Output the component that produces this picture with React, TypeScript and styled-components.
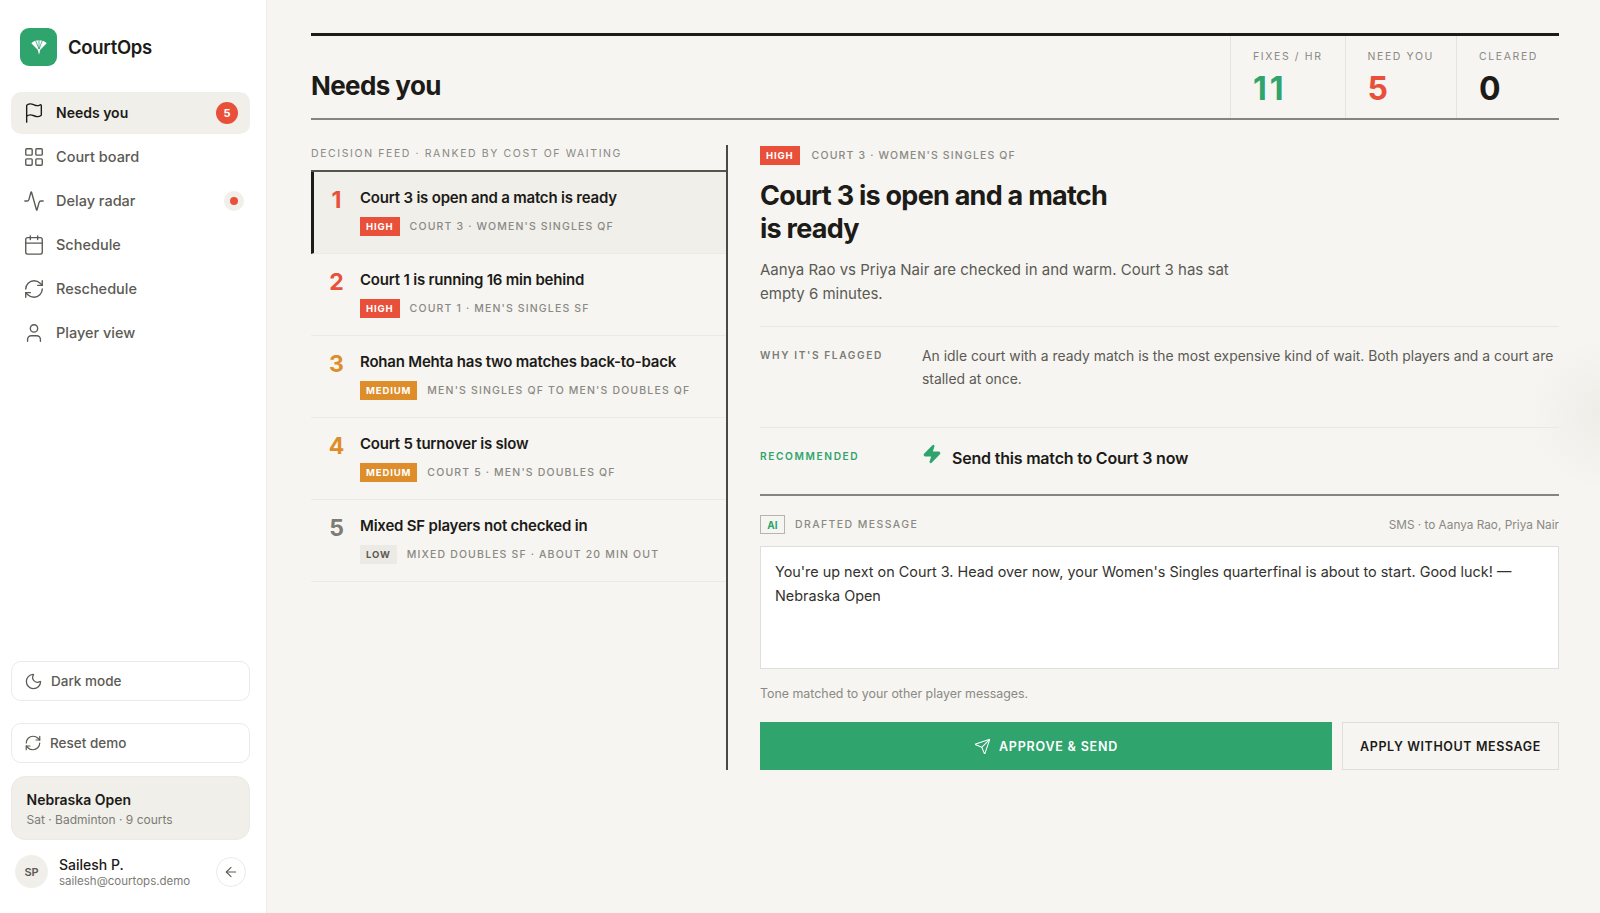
import React from 'react';
import styled, { createGlobalStyle } from 'styled-components';
import { Activity, ArrowLeft, Calendar, Flag, LayoutGrid, Moon, RefreshCw, Send, User, Zap } from 'lucide-react';

const GlobalStyle = createGlobalStyle`
    html, body {
        margin: 0;
        height: 100%;
        background: #f6f5f1;
        color: #1c1b18;
        font-family: "Inter", "Liberation Sans", sans-serif;
    }
    * { box-sizing: border-box; }
`;

const RED = '#e8503a';
const AMBER = '#dd8e2b';
const GREEN = '#2fa46d';
const GREY = '#7c7b75';

type Level = 'high' | 'medium' | 'low';

const levelColor = (l: Level) => (l === 'high' ? RED : l === 'medium' ? AMBER : GREY);

const NAV = [
    { label: 'Needs you', icon: Flag, active: true },
    { label: 'Court board', icon: LayoutGrid },
    { label: 'Delay radar', icon: Activity, dot: true },
    { label: 'Schedule', icon: Calendar },
    { label: 'Reschedule', icon: RefreshCw },
    { label: 'Player view', icon: User },
];

const FEED: { title: string; level: Level; meta: string }[] = [
    { title: 'Court 3 is open and a match is ready', level: 'high', meta: "COURT 3 · WOMEN'S SINGLES QF" },
    { title: 'Court 1 is running 16 min behind', level: 'high', meta: "COURT 1 · MEN'S SINGLES SF" },
    { title: 'Rohan Mehta has two matches back-to-back', level: 'medium', meta: "MEN'S SINGLES QF TO MEN'S DOUBLES QF" },
    { title: 'Court 5 turnover is slow', level: 'medium', meta: "COURT 5 · MEN'S DOUBLES QF" },
    { title: 'Mixed SF players not checked in', level: 'low', meta: 'MIXED DOUBLES SF · ABOUT 20 MIN OUT' },
];

const App: React.FC = () => {
    return (
        <Page>
            <GlobalStyle />
            <Sidebar>
                <Brand>
                    <LogoBox>
                        <svg width="16" height="16" viewBox="0 0 16 16">
                            <path fill="#fff" d="M0.3 4.2 C3.5 0.3 12.5 0.3 15.700 4.200 L9.300 10.800 L8 15.800 L6.700 10.800 Z" />
                            <path stroke={GREEN} strokeWidth="0.8" fill="none" d="M8 10 L4.600 1.500 M8 10 L8 0.800 M8 10 L11.400 1.500" />
                        </svg>
                    </LogoBox>
                    <BrandName>CourtOps</BrandName>
                </Brand>
                <Nav>
                    {NAV.map(item => (
                        <NavItem key={item.label} $active={item.active}>
                            <item.icon size={22} strokeWidth={1.5} />
                            <NavLabel $active={item.active}>{item.label}</NavLabel>
                            {item.active && <CountBadge>5</CountBadge>}
                            {item.dot && <DotWrap><Dot /></DotWrap>}
                        </NavItem>
                    ))}
                </Nav>
                <SideFooter>
                    <SideButton>
                        <Moon size={19} strokeWidth={1.6} />
                        Dark mode
                    </SideButton>
                    <SideButton>
                        <RefreshCw size={18} strokeWidth={1.6} />
                        Reset demo
                    </SideButton>
                    <EventCard>
                        <EventName>Nebraska Open</EventName>
                        <EventInfo>Sat · Badminton · 9 courts</EventInfo>
                    </EventCard>
                    <UserRow>
                        <Avatar>SP</Avatar>
                        <UserText>
                            <UserName>Sailesh P.</UserName>
                            <UserMail>sailesh@courtops.demo</UserMail>
                        </UserText>
                        <BackBtn><ArrowLeft size={16} strokeWidth={1.6} /></BackBtn>
                    </UserRow>
                </SideFooter>
            </Sidebar>
            <Main>
                <Header>
                    <PageTitle>Needs you</PageTitle>
                    <Stat><StatLabel>FIXES / HR</StatLabel><StatValue $color={GREEN}>11</StatValue></Stat>
                    <Stat><StatLabel>NEED YOU</StatLabel><StatValue $color={RED}>5</StatValue></Stat>
                    <Stat><StatLabel>CLEARED</StatLabel><StatValue $color="#1c1b18">0</StatValue></Stat>
                </Header>
                <Columns>
                    <Feed>
                        <FeedLabel>DECISION FEED · RANKED BY COST OF WAITING</FeedLabel>
                        <FeedList>
                            {FEED.map((row, i) => (
                                <FeedRow key={row.title} $active={i === 0}>
                                    <RowNum $color={levelColor(row.level)}>{i + 1}</RowNum>
                                    <RowBody>
                                        <RowTitle>{row.title}</RowTitle>
                                        <RowMeta>
                                            <Tag $level={row.level}>{row.level.toUpperCase()}</Tag>
                                            <MetaText>{row.meta}</MetaText>
                                        </RowMeta>
                                    </RowBody>
                                </FeedRow>
                            ))}
                        </FeedList>
                    </Feed>
                    <Detail>
                        <DetailTop>
                            <Tag $level="high">HIGH</Tag>
                            <MetaText>COURT 3 · WOMEN'S SINGLES QF</MetaText>
                        </DetailTop>
                        <DetailTitle>Court 3 is open and a match is ready</DetailTitle>
                        <DetailBody>Aanya Rao vs Priya Nair are checked in and warm. Court 3 has sat empty 6 minutes.</DetailBody>
                        <WhyRow>
                            <SideLabel>WHY IT'S FLAGGED</SideLabel>
                            <WhyText>An idle court with a ready match is the most expensive kind of wait. Both players and a court are stalled at once.</WhyText>
                        </WhyRow>
                        <RecRow>
                            <SideLabel $green>RECOMMENDED</SideLabel>
                            <RecAction>
                                <RecIcon size={20} color={GREEN} fill={GREEN} />
                                <RecText>Send this match to Court 3 now</RecText>
                            </RecAction>
                        </RecRow>
                        <DraftHead>
                            <AiTag>AI</AiTag>
                            <DraftLabel>DRAFTED MESSAGE</DraftLabel>
                            <DraftTo>SMS · to Aanya Rao, Priya Nair</DraftTo>
                        </DraftHead>
                        <Message>You're up next on Court 3. Head over now, your Women's Singles quarterfinal is about to start. Good luck! — Nebraska Open</Message>
                        <ToneNote>Tone matched to your other player messages.</ToneNote>
                        <Actions>
                            <ApproveBtn><Send size={17} strokeWidth={1.5} />APPROVE &amp; SEND</ApproveBtn>
                            <ApplyBtn>APPLY WITHOUT MESSAGE</ApplyBtn>
                        </Actions>
                    </Detail>
                </Columns>
            </Main>
            <EdgeGlow />
        </Page>
    );
};

export default App;

const Page = styled.div`
    position: relative;
    display: flex;
    width: 100%;
    height: 913px;
    overflow: hidden;
`;

const EdgeGlow = styled.div`
    position: absolute;
    top: 340px;
    right: -70px;
    width: 140px;
    height: 150px;
    border-radius: 50%;
    background: radial-gradient(closest-side, #eeede8, rgba(238, 237, 232, 0));
    pointer-events: none;
`;

const Sidebar = styled.aside`
    display: flex;
    flex-direction: column;
    flex: 0 0 267px;
    padding: 28px 16px 25px 11px;
    background: #ffffff;
    border-right: 1px solid #eeede8;
`;

const Brand = styled.div`
    display: flex;
    align-items: center;
    gap: 11px;
    padding-left: 9px;
    margin-bottom: 26px;
`;

const LogoBox = styled.div`
    display: flex;
    align-items: center;
    justify-content: center;
    width: 37px;
    height: 38px;
    border-radius: 9px;
    background: ${GREEN};
`;

const BrandName = styled.div`
    font-size: 18.5px;
    font-weight: 600;
    letter-spacing: -0.3px;
`;

const Nav = styled.nav`
    display: flex;
    flex-direction: column;
    gap: 2px;
`;

const NavItem = styled.div<{ $active?: boolean }>`
    display: flex;
    align-items: center;
    height: 42px;
    padding: 0 12px;
    border-radius: 10px;
    background: ${p => (p.$active ? '#f0efea' : 'transparent')};
    color: ${p => (p.$active ? '#1c1b18' : '#5b5a54')};
    font-weight: ${p => (p.$active ? 600 : 500)};
`;

const NavLabel = styled.span<{ $active?: boolean }>`
    flex: 1;
    margin-left: 11px;
    padding-bottom: 2px;
    font-size: ${p => (p.$active ? 14 : 14.5)}px;
`;

const CountBadge = styled.span`
    display: flex;
    align-items: center;
    justify-content: center;
    width: 22px;
    height: 22px;
    border-radius: 50%;
    background: ${RED};
    color: #fff;
    font-size: 11px;
    font-weight: 700;
`;

const DotWrap = styled.span`
    display: flex;
    align-items: center;
    justify-content: center;
    width: 20px;
    height: 20px;
    margin-right: -6px;
    border-radius: 50%;
    background: #f0efea;
`;

const Dot = styled.span`
    width: 8px;
    height: 8px;
    border-radius: 50%;
    background: ${RED};
`;

const SideFooter = styled.div`
    display: flex;
    flex-direction: column;
    margin-top: auto;
`;

const SideButton = styled.div`
    display: flex;
    align-items: center;
    gap: 8px;
    height: 40px;
    margin-bottom: 22px;
    padding-left: 12px;
    border: 1px solid #ebeae5;
    border-radius: 10px;
    color: #5b5a54;
    font-size: 13.5px;
    font-weight: 500;

    & + & {
        margin-bottom: 13px;
    }
`;

const EventCard = styled.div`
    height: 64px;
    padding: 14px 14.5px;
    border: 1px solid #ebeae5;
    border-radius: 14px;
    background: #f0efea;
`;

const EventName = styled.div`
    font-size: 14px;
    font-weight: 600;
    line-height: 18px;
`;

const EventInfo = styled.div`
    margin-top: 3px;
    color: #7c7b75;
    font-size: 12px;
    line-height: 16px;
`;

const UserRow = styled.div`
    display: flex;
    align-items: center;
    height: 33px;
    margin-top: 15px;
    padding: 0 4px;
`;

const Avatar = styled.div`
    display: flex;
    align-items: center;
    justify-content: center;
    width: 33px;
    height: 33px;
    border-radius: 50%;
    background: #f0efea;
    color: #5b5a54;
    font-size: 11px;
    font-weight: 600;
`;

const UserText = styled.div`
    flex: 1;
    margin: 2px 0 0 11px;
`;

const UserName = styled.div`
    font-size: 14px;
    font-weight: 500;
    line-height: 17px;
`;

const UserMail = styled.div`
    margin-top: 1px;
    color: #7c7b75;
    font-size: 11.5px;
    line-height: 15px;
`;

const BackBtn = styled.div`
    display: flex;
    align-items: center;
    justify-content: center;
    width: 30px;
    height: 30px;
    border: 1px solid #ebeae5;
    border-radius: 50%;
    color: #5b5a54;
`;

const Main = styled.main`
    flex: 1;
    padding: 33px 41px 0 44px;
`;

const Header = styled.header`
    display: flex;
    align-items: stretch;
    height: 87px;
    border-top: 3px solid #1c1b18;
    border-bottom: 2px solid #85847e;
`;

const PageTitle = styled.h1`
    flex: 1;
    align-self: flex-end;
    margin: 0 0 17px;
    font-size: 26px;
    font-weight: 700;
    letter-spacing: -0.6px;
`;

const Stat = styled.div`
    padding: 14px 22px 0;
    border-left: 1px solid #e4e3de;

    &:last-child {
        padding-right: 21px;
    }
`;

const StatLabel = styled.div`
    color: #8a8983;
    font-size: 10.5px;
    letter-spacing: 1.6px;
    white-space: nowrap;
`;

const StatValue = styled.div<{ $color: string }>`
    margin-top: 7px;
    color: ${p => p.$color};
    font-size: 32px;
    font-weight: 700;
    line-height: 38px;
    letter-spacing: 3px;
`;

const Columns = styled.div`
    display: flex;
    margin-top: 25px;
`;

const Feed = styled.section`
    flex: 0 0 417px;
    height: 625px;
    border-right: 2px solid #4a4945;
`;

const FeedLabel = styled.div`
    height: 25px;
    padding-top: 2px;
    color: #8a8983;
    font-size: 10.5px;
    letter-spacing: 1.6px;
    line-height: 14px;
`;

const FeedList = styled.div`
    border-top: 2px solid #55544f;
`;

const FeedRow = styled.div<{ $active?: boolean }>`
    display: flex;
    height: 82px;
    padding: 16px 0 0 ${p => (p.$active ? 9 : 12)}px;
    border-left: ${p => (p.$active ? '3px solid #1c1b18' : 'none')};
    border-bottom: 1px solid #ebeae5;
    background: ${p => (p.$active ? '#f0efea' : 'transparent')};
`;

const RowNum = styled.div<{ $color: string }>`
    width: 27px;
    margin: -3px 10px 0 0;
    color: ${p => p.$color};
    font-size: 23px;
    font-weight: 700;
    line-height: 30px;
    text-align: center;
`;

const RowBody = styled.div`
    display: flex;
    flex-direction: column;
    gap: 9px;
`;

const RowTitle = styled.div`
    font-size: 15px;
    font-weight: 600;
    line-height: 20px;
    letter-spacing: -0.2px;
`;

const RowMeta = styled.div`
    display: flex;
    align-items: center;
    gap: 10px;
`;

const Tag = styled.span<{ $level: Level }>`
    display: inline-flex;
    align-items: center;
    height: 19px;
    padding: 0 6px;
    background: ${p => (p.$level === 'high' ? RED : p.$level === 'medium' ? AMBER : '#ebeae5')};
    color: ${p => (p.$level === 'low' ? '#5b5a54' : '#fff')};
    font-size: 9.5px;
    font-weight: 700;
    letter-spacing: 0.9px;
`;

const MetaText = styled.span`
    color: #8a8983;
    font-size: 10.5px;
    font-weight: 500;
    letter-spacing: 1.15px;
    white-space: nowrap;
`;

const Detail = styled.section`
    flex: 1;
    padding-left: 32px;
`;

const DetailTop = styled.div`
    display: flex;
    align-items: center;
    gap: 12px;
    margin-top: 1px;
`;

const DetailTitle = styled.h2`
    width: 370px;
    margin: 15px 0 0;
    font-size: 27px;
    font-weight: 700;
    line-height: 32.5px;
    letter-spacing: -0.75px;
`;

const DetailBody = styled.p`
    width: 490px;
    margin: 13px 0 0;
    color: #5b5a54;
    font-size: 15px;
    line-height: 24px;
`;

const WhyRow = styled.div`
    display: flex;
    height: 101px;
    margin-top: 20px;
    padding-top: 19px;
    border-top: 1px solid #e8e7e2;
`;

const SideLabel = styled.div<{ $green?: boolean }>`
    flex: 0 0 162px;
    margin-top: ${p => (p.$green ? -4 : 0)}px;
    color: ${p => (p.$green ? GREEN : '#7c7b75')};
    font-size: 10.2px;
    font-weight: 600;
    letter-spacing: 1.6px;
    line-height: 18px;
`;

const WhyText = styled.div`
    margin-top: -1px;
    color: #5b5a54;
    font-size: 13.9px;
    line-height: 22.5px;
`;

const RecRow = styled.div`
    display: flex;
    align-items: center;
    height: 69px;
    padding-bottom: 6px;
    border-top: 1px solid #e8e7e2;
    border-bottom: 2px solid #85847e;
`;

const RecAction = styled.div`
    display: flex;
    align-items: center;
    gap: 10px;
`;

const RecIcon = styled(Zap)`
    margin-top: -8px;
`;

const RecText = styled.div`
    font-size: 16px;
    font-weight: 600;
    letter-spacing: -0.2px;
`;

const DraftHead = styled.div`
    display: flex;
    align-items: center;
    margin-top: 19px;
`;

const AiTag = styled.span`
    display: flex;
    align-items: center;
    justify-content: center;
    width: 25px;
    height: 19px;
    border: 1px solid #b5b4ae;
    color: ${GREEN};
    font-size: 10px;
    font-weight: 700;
`;

const DraftLabel = styled.span`
    flex: 1;
    margin-left: 10px;
    color: #8a8983;
    font-size: 10.5px;
    font-weight: 500;
    letter-spacing: 1.4px;
`;

const DraftTo = styled.span`
    color: #8a8983;
    font-size: 11.8px;
`;

const Message = styled.div`
    height: 123px;
    margin-top: 12px;
    padding: 13px 14px;
    background: #fff;
    border: 1px solid #dfded9;
    color: #33322e;
    font-size: 14.4px;
    line-height: 23.5px;
`;

const ToneNote = styled.div`
    margin-top: 17px;
    color: #8a8983;
    font-size: 12.4px;
    line-height: 16px;
`;

const Actions = styled.div`
    display: flex;
    gap: 10px;
    margin-top: 20px;
`;

const ApproveBtn = styled.div`
    display: flex;
    flex: 1;
    align-items: center;
    justify-content: center;
    gap: 8px;
    height: 48px;
    background: ${GREEN};
    color: #fff;
    font-size: 12.5px;
    font-weight: 600;
    letter-spacing: 0.8px;
`;

const ApplyBtn = styled.div`
    display: flex;
    flex: 0 0 217px;
    align-items: center;
    justify-content: center;
    height: 48px;
    border: 1px solid #dfded9;
    font-size: 12.5px;
    font-weight: 600;
    letter-spacing: 0.6px;
`;
